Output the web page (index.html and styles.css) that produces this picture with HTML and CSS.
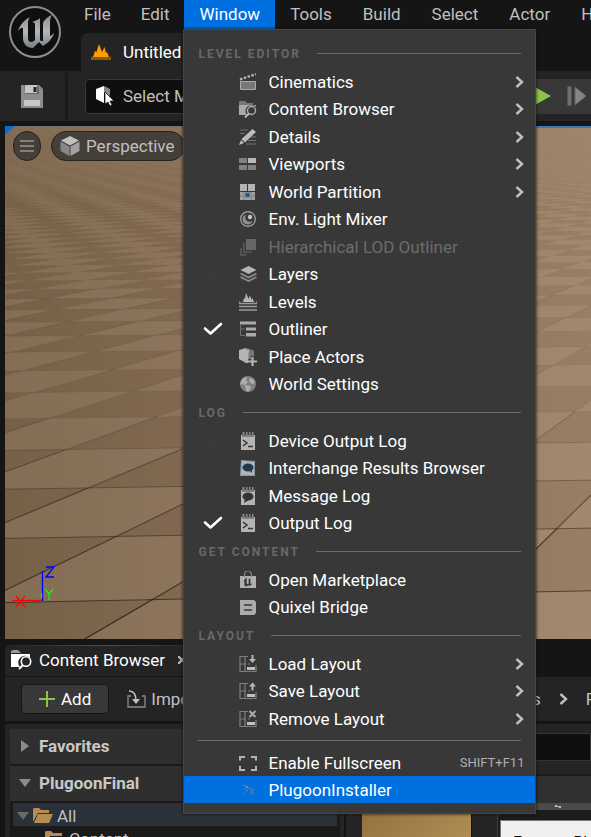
FILE: index.html
```html
<!DOCTYPE html>
<html lang="en">
<head>
<meta charset="utf-8">
<title>Level Editor</title>
<link rel="stylesheet" href="styles.css">
</head>
<body>
<svg class="defs" aria-hidden="true">
  <symbol id="check" viewBox="0 0 20 14"><path d="M2 6.500 7.500 11.500 18 2" fill="none" stroke="currentColor" stroke-width="2.600" stroke-linecap="round" stroke-linejoin="round"/></symbol>
  <symbol id="arrow" viewBox="0 0 9 14"><path d="M1.500 2 7 7l-5.500 5" fill="none" stroke="currentColor" stroke-width="2.400"/></symbol>
  <symbol id="log" viewBox="0 0 18 18"><path d="M2 3h14v15H2z" fill="#b4b4b4"/><path d="M3.500 0h2v4h-2zM7 0h1.500v4H7zM10 0h1.500v4H10zM13 0h1.500v4H13z" fill="#8a8a8a"/><path d="M3 4h12" stroke="#555"/></symbol>
  <symbol id="layout" viewBox="0 0 18 18"><path d="M9 1.500H1v15h16V10M1 9h6M6 2v14M9 9h2" fill="none" stroke="#7f7f7f" stroke-width="1.200"/><path d="M8 12h8v3H8z" fill="#c0c0c0"/></symbol>
  <symbol id="u" viewBox="0 0 30 30"><path d="M1 12C4 7 8 4 13 2c-2 2-2 4-2 6v11c0 2 1 3 3 3 1 0 2-1 3-2V9c0-1-1-2-2-2 3-1 6-2 8-5 0 2-1 3-1 5v12c0 1 1 2 2 2s2-1 4-2c-2 4-5 7-9 8l-3-3-4 4C7 29 4 26 4 21V12c0-2-1-2-3 0z" fill="currentColor"/></symbol>
</svg>
<div class="app">
  <header class="header">
    <div class="logo">
      <svg viewBox="0 0 54 54" width="54" height="54" role="img" aria-label="Engine logo">
        <defs><linearGradient id="metal" x2="0" y2="1"><stop stop-color="#8c8e90"/><stop offset=".5" stop-color="#b4b6b7"/><stop offset="1" stop-color="#7b7e80"/></linearGradient></defs>
        <circle cx="27" cy="27" r="25" fill="#0e0f10" stroke="#8b8f91" stroke-width="2"/>
        <path d="M10 26c2-6 6-11 12-14-2 3-2 5-2 7v14c0 2 1 4 3 4 2 0 3-1 4-2V20c0-2-1-3-3-3 4-1 7-3 8-4v21c0 2 1 2 2 2h1V19c0-3 4-7 9-9-2 3-2 5-2 8v13c1 0 2-1 4-3-2 6-6 10-11 13l-4-4-6 6c-7 0-10-5-10-10V24c0-2-2-2-5 2z" fill="url(#metal)"/>
      </svg>
    </div>
    <div class="header-rows">
      <nav class="menubar" aria-label="Main menu">
        <button>File</button>
        <button>Edit</button>
        <div class="menu-anchor">
          <button class="open" aria-expanded="true">Window</button>
          <div class="menu" role="menu">
            <h2>Level Editor</h2>
            <div class="group">
              <button class="item"><span></span><svg class="icon" viewBox="0 0 18 18"><path d="M1.500 8.500h15v8h-15z" fill="#777" stroke="#aaa"/><path d="M1 6.500 17 1" stroke="#b5b5b5" stroke-width="2.400" stroke-dasharray="2.500 1.500"/></svg>Cinematics<svg class="arrow"><use href="#arrow"/></svg></button>
              <button class="item"><span></span><svg class="icon" viewBox="0 0 18 18"><path d="M0 1h6l2 2h6v3H0z" fill="#777"/><path d="M0 5h17v2a6 6 0 0 0-9 8H0z" fill="#aaa"/><circle cx="12.500" cy="10.500" r="4" fill="#383838" stroke="#aaa" stroke-width="1.500"/><path d="m10 13.500-4 4" stroke="#bbb" stroke-width="1.800"/></svg>Content Browser<svg class="arrow"><use href="#arrow"/></svg></button>
              <button class="item"><span></span><svg class="icon" viewBox="0 0 18 18"><path d="M1 2h8M1 5.500h5M11 9h6M9 12.500h8M7 16h10" stroke="#707070"/><path d="m13.500 1 3.500 3L6 14.500 2.500 11zM2 12l3 3-5 2z" fill="#bcbcbc"/></svg>Details<svg class="arrow"><use href="#arrow"/></svg></button>
              <button class="item"><span></span><svg class="icon" viewBox="0 0 18 18"><path d="M0 3h8v5H0zM0 10h8v5H0zM9 10h8v5H9z" fill="#808080"/><path d="M9 3h8v5H9z" fill="#b8b8b8"/></svg>Viewports<svg class="arrow"><use href="#arrow"/></svg></button>
              <button class="item"><span></span><svg class="icon" viewBox="0 0 18 18"><path d="M1 1h7v7H1zM9 1h7v7H9z" fill="#b4b4b4"/><path d="M1 9h15v8H1z" fill="#a0a0a0"/><path d="M1 13h4M12 13h4M5 9v8M12 9v8" stroke="#808080"/><path d="M6 9.500h5v5H6z" fill="#607890"/><path d="M7 10.500h3v3H7z" fill="#114d94"/></svg>World Partition<svg class="arrow"><use href="#arrow"/></svg></button>
              <button class="item"><svg class="check off"><use href="#check"/></svg><svg class="icon" viewBox="0 0 18 18"><circle cx="9" cy="9" r="7.300" fill="none" stroke="#999" stroke-width="1.400"/><path d="M7.500 4.500a5 5 0 1 0 6 6 4 4 0 0 1-6-6z" fill="#909090"/><circle cx="11" cy="7" r="2.200" fill="#c4c4c4"/></svg>Env. Light Mixer</button>
              <button class="item" disabled><span></span><svg class="icon" viewBox="0 0 18 18"><path d="M7 1h10v11H7z" fill="#666"/><path d="M4 5h2v8h7v2H4zM1 10h2v6h4v2H1z" fill="#525252"/></svg>Hierarchical LOD Outliner</button>
              <button class="item"><svg class="check off"><use href="#check"/></svg><svg class="icon" viewBox="0 0 18 18"><path d="m9.500 1 8 4-8 4-8-4z" fill="#b4b4b4"/><path d="m1.500 8.500 8 4 8-4M1.500 12l8 4 8-4" fill="none" stroke="#8c8c8c" stroke-width="1.700"/></svg>Layers</button>
              <button class="item"><svg class="check off"><use href="#check"/></svg><svg class="icon" viewBox="0 0 18 18"><path d="M4 9 5 5l1 1L7 0l2.500 6L11 2.500 12.500 7l1-2L15 9z" fill="#b8b8b8"/><path d="M.500 8.500v2h17v-2M0 13.500h18M0 17h18" fill="none" stroke="#999" stroke-width="1.300"/></svg>Levels</button>
              <button class="item"><svg class="check"><use href="#check"/></svg><svg class="icon" viewBox="0 0 18 18"><path d="M1 1.500h16v3H1zM7 7.500h10v3H7zM7 13h10v3.500H7z" fill="#aaa"/><path d="M1.500 5v10.500H6M2 9h4" fill="none" stroke="#707070"/></svg>Outliner</button>
              <button class="item"><svg class="check off"><use href="#check"/></svg><svg class="icon" viewBox="0 0 18 18"><path d="m0 2 7-2v15l-7-4z" fill="#b4b4b4"/><path d="m7 0 8 2.500V8h-3v3H9l-2 2z" fill="#777"/><path d="m7 2 3-1-1 14H7z" fill="#b4b4b4"/><path d="M13.500 9v9M9 13.500h9" stroke="#b4b4b4" stroke-width="2.200"/></svg>Place Actors</button>
              <button class="item"><svg class="check off"><use href="#check"/></svg><svg class="icon" viewBox="0 0 18 18"><circle cx="9" cy="9" r="8" fill="#808080"/><path d="M2 6c1-3 4-4 6-4l-1 3 2 2-3 3-3-1-2 1zM11 3l4 2 1 3-3 1-3-3zM6 10l5 1 1 2-3 4-2-2z" fill="#acacac"/></svg>World Settings</button>
            </div>
            <h2>Log</h2>
            <div class="group">
              <button class="item"><svg class="check off"><use href="#check"/></svg><svg class="icon" viewBox="0 0 18 18"><use href="#log"/><path d="m4 8 4 3-4 3M9 14.500h5" fill="none" stroke="#343434" stroke-width="1.500"/></svg>Device Output Log</button>
              <button class="item"><svg class="check off"><use href="#check"/></svg><svg class="icon" viewBox="0 0 18 18"><path d="m2 1 14 1v15H1z" fill="#8899a5"/><path d="m3 2 12 1v13H2z" fill="#aeb5b8"/><ellipse cx="9" cy="8.500" rx="5.500" ry="4" fill="#24384c"/><path d="m10 11 3 3v-4z" fill="#24384c"/></svg>Interchange Results Browser</button>
              <button class="item"><svg class="check off"><use href="#check"/></svg><svg class="icon" viewBox="0 0 18 18"><use href="#log"/><ellipse cx="9" cy="9.500" rx="5.500" ry="4" fill="#343434"/><path d="m6 12-1 4 5-3z" fill="#343434"/></svg>Message Log</button>
              <button class="item"><svg class="check"><use href="#check"/></svg><svg class="icon" viewBox="0 0 18 18"><use href="#log"/><path d="m4 8 4 3-4 3M9 14.500h5" fill="none" stroke="#343434" stroke-width="1.500"/></svg>Output Log</button>
            </div>
            <h2>Get Content</h2>
            <div class="group">
              <button class="item"><span></span><svg class="icon dark" viewBox="0 0 18 18"><path d="M1 5h16v12H1z" fill="#b0b0b0"/><path d="M5.500 6V3.500a3.500 3.500 0 0 1 7 0V6" fill="none" stroke="#808080" stroke-width="1.200"/><use href="#u" x="4" y="6" width="10" height="10"/></svg>Open Marketplace</button>
              <button class="item"><span></span><svg class="icon" viewBox="0 0 18 18"><path d="M1 2h14l2 2v11l-2 2H1z" fill="#aaa"/><path d="M5 7h8M5 12h8" stroke="#383838" stroke-width="1.600"/></svg>Quixel Bridge</button>
            </div>
            <h2>Layout</h2>
            <div class="group">
              <button class="item"><span></span><svg class="icon" viewBox="0 0 18 18"><use href="#layout"/><path d="M12.500 0h2v4H17l-3.500 4L10 4h2.500z" fill="#b8b8b8"/></svg>Load Layout<svg class="arrow"><use href="#arrow"/></svg></button>
              <button class="item"><span></span><svg class="icon" viewBox="0 0 18 18"><use href="#layout"/><path d="M12.500 8.500h2v-4H17L13.500.500 10 4.500h2.500z" fill="#b8b8b8"/></svg>Save Layout<svg class="arrow"><use href="#arrow"/></svg></button>
              <button class="item"><span></span><svg class="icon" viewBox="0 0 18 18"><use href="#layout"/><path d="m10.500 1 6 6m0-6-6 6" stroke="#b0b0b0" stroke-width="1.900"/></svg>Remove Layout<svg class="arrow"><use href="#arrow"/></svg></button>
            </div>
            <hr>
            <div class="group">
              <button class="item"><svg class="check off"><use href="#check"/></svg><svg class="icon" viewBox="0 0 18 18"><path d="M1 6.500V3h5M12 3h5v3.500M1 12v4h5M12 16h5v-4" fill="none" stroke="#b4b4b4" stroke-width="2"/></svg>Enable Fullscreen<kbd>SHIFT+F11</kbd></button>
              <button class="item selected"><span></span><svg class="icon" viewBox="0 0 18 18"><path d="m4 4 3 1M10 7l4 2-2 2 3 3" stroke="#56789a" stroke-width="1.500" fill="none"/><path d="m5 13 6-7M5 7l3 3" stroke="#247fc4" stroke-width="1.500"/><circle cx="8" cy="6" r="1" fill="#a39b58"/></svg>PlugoonInstaller</button>
            </div>
          </div>
        </div>
        <button>Tools</button>
        <button>Build</button>
        <button>Select</button>
        <button>Actor</button>
        <button>Help</button>
      </nav>
      <div class="level-tab"><svg viewBox="0 0 20 18" width="20" height="18"><path d="M2 14 4 8l1.500 1L8 1l3 8L13.500 4l1.500 6 1-1 2 5z" fill="#ff9c00"/><path d="M0 13v4h20v-4l-1 1H1z" fill="#8c5909"/></svg>Untitled</div>
    </div>
  </header>

  <div class="toolbar">
    <button class="save" aria-label="Save"><svg viewBox="0 0 22 23" width="22" height="23"><path d="M0 0h18l4 4v19H0z" fill="#8d8d8d"/><path d="M4 0h12v8H4z" fill="#c7c7c7"/><path d="M3 0h1v9h14V2l-2-2v8H4z" fill="#666"/><path d="M12.500 2h3v5h-3z" fill="#222"/><path d="M3 15h16v6H3z" fill="#c7c7c7"/></svg></button>
    <button class="mode"><svg viewBox="0 0 20 20" width="20" height="20"><path d="m1 3 8-3v17l-8-4z" fill="#fff"/><path d="m9 0 6 3v7L9 6z" fill="#888"/><path d="m10 6 9 9h-4l2 4-2 1-2-4-3 2z" fill="#fff" stroke="#111" stroke-width=".7"/></svg>Select Mode</button>
    <div class="play-controls">
      <button aria-label="Play"><svg viewBox="0 0 18 20" width="18" height="20"><path d="m0 0 18 10L0 20z" fill="#8bc34a"/></svg></button>
      <button aria-label="Step"><svg viewBox="0 0 20 20" width="20" height="20"><path d="M.500.500h4v19h-4z" fill="#6e6e6e"/><path d="m8 1 11 9L8 19z" fill="#858585" stroke="#666"/></svg></button>
    </div>
  </div>

  <main class="viewport">
    <svg class="scene" viewBox="5 126 586 513" preserveAspectRatio="xMinYMin slice" aria-hidden="true">
      <defs>
        <linearGradient id="shade"><stop stop-color="#766047"/><stop offset=".3" stop-color="#806950"/><stop offset="1" stop-color="#987f63"/></linearGradient>
        <linearGradient id="tone"><stop stop-color="#836c54"/><stop offset=".3" stop-color="#8b735a"/><stop offset="1" stop-color="#9f866b"/></linearGradient>
        <linearGradient id="fade" x2="0" y2="1"><stop stop-color="#fff"/><stop offset=".4" stop-color="#fff" stop-opacity=".8"/><stop offset="1" stop-color="#fff" stop-opacity="0"/></linearGradient>
        <mask id="far"><rect x="5" y="126" width="586" height="84" fill="url(#fade)"/></mask>
      </defs>
      <rect x="5" y="126" width="586" height="513" fill="url(#shade)"/>
      <path id="tiles" fill="#ffe6cc" fill-opacity=".1"/>
      <g id="seams" stroke="#1c120a" fill="none"></g>
      <rect x="5" y="126" width="586" height="84" fill="url(#tone)" mask="url(#far)"/>
      <path d="M536 126h55v2h-55z" fill="#3b79bd"/>
      <path d="M14 126h522v1.500H14z" fill="#727274"/>
      <path d="M5 126h10l-10 9z" fill="#0070e0"/>
      <g fill="none" stroke-width="1.300"><path d="M12 600.500h30" stroke="#f00"/><path d="M42.500 571v30" stroke="#00f"/><path d="M41.500 593v5" stroke="#0f0"/>
      <path d="m16 596 9 11m0-11-9 11" stroke="#f00"/><path d="m45 589 4 5 4-5m-4 5v6" stroke="#0f0"/><path d="M46 567h8l-8 10h8" stroke="#00f"/></g>
    </svg>
    <div class="viewport-bar">
      <button class="round" aria-label="Viewport options"><svg viewBox="0 0 14 12" width="14" height="12"><path d="M0 1h14M0 6h14M0 11h14" stroke="#c0c0c0" stroke-width="1.200"/></svg></button>
      <button class="pill"><svg viewBox="0 0 20 20" width="20" height="20"><path d="m10 0 9 4.500-9 5-9-5z" fill="#c0c0c0"/><path d="m.500 5.500 9 5V20l-9-5z" fill="#888"/><path d="m19.500 5.500-9 5V20l9-5z" fill="#a2a2a2"/></svg>Perspective</button>
    </div>
  </main>

  <section class="browser">
    <div class="browser-tabs">
      <div class="browser-tab"><svg viewBox="0 0 21 20" width="21" height="20"><path d="M0 3V1l2-1h5l3 3z" fill="#999"/><path d="M0 4h19v4a6 6 0 0 0-10 9H0z" fill="#fff"/><circle cx="15" cy="11.500" r="4.700" fill="#242424" stroke="#fff" stroke-width="1.600"/><path d="m12 15-4 4" stroke="#fff" stroke-width="2"/></svg>Content Browser<button aria-label="Close tab"><svg viewBox="0 0 8 8" width="8" height="8"><path d="m0 0 8 8m0-8L0 8" stroke="#c0c0c0" stroke-width="2"/></svg></button></div>
    </div>
    <div class="browser-bar">
      <button class="add"><svg viewBox="0 0 16 16" width="16" height="16"><path d="M8 0v16M0 8h16" stroke="#8bc34a" stroke-width="2"/></svg>Add</button>
      <button class="import"><svg viewBox="0 0 19 18" width="19" height="18"><path d="M4 6H1v11h17V6h-3" fill="none" stroke="#8c8c8c" stroke-width="1.300"/><path d="M2 1c5 0 7 4 7 10" fill="none" stroke="#c0c0c0" stroke-width="1.600"/><path d="M5 9h8l-4 5z" fill="#c0c0c0"/></svg>Import</button>
      <nav class="crumbs" aria-label="Folder path"><a href="#">Plugins</a><svg class="arrow"><use href="#arrow"/></svg><a href="#">Plugoon</a></nav>
    </div>
    <div class="browser-body">
      <aside class="sources">
        <button class="source"><svg viewBox="0 0 12 12" width="12" height="12"><path d="m2 0 8 6-8 6z" fill="#8c8c8c"/></svg>Favorites</button>
        <button class="source"><svg viewBox="0 0 12 12" width="12" height="12"><path d="M0 2h12L6 10z" fill="#8c8c8c"/></svg>PlugoonFinal</button>
        <div class="tree">
          <div class="node current"><svg viewBox="0 0 12 12" width="12" height="12"><path d="M0 2h12L6 10z" fill="#686868"/></svg><svg viewBox="0 0 20 16" width="20" height="16"><path d="M0 14V1l1-1h5l2 2h8v3H5z" fill="#b58d52"/><path d="M5 6h15l-4 9H1z" fill="#b58d52"/></svg>All</div>
          <div class="node child"><svg viewBox="0 0 20 16" width="20" height="16"><path d="M0 14V1l1-1h5l2 2h9v3H5z" fill="#b58d52"/><path d="M5 6h15l-4 9H1z" fill="#b58d52"/></svg>Content</div>
        </div>
      </aside>
      <div class="assets">
        <div class="search"><input type="text" aria-label="Search assets"></div>
        <div class="asset-grid">
          <div class="asset texture"></div>
          <div class="asset"><div class="thumb"></div><div class="ribbon"><svg viewBox="0 0 6 3" width="6" height="3"><path d="M0 0h2v1h4v2H4V2H0z" fill="#bbb"/></svg></div></div>
          <div class="tooltip" role="tooltip">Execute Plugoon</div>
        </div>
      </div>
    </div>
  </section>
</div>
<script src="floor.js"></script>
</body>
</html>
```
FILE: styles.css
```css
* { box-sizing: border-box; }
body {
  margin: 0;
  background: #151515;
  color: #c0c0c0;
  font-family: Roboto, "Liberation Sans", sans-serif;
  font-size: 17px;
  line-height: 20px;
  overflow: hidden;
}
button, input { font: inherit; color: inherit; background: none; border: 0; margin: 0; padding: 0; }
button { text-align: left; white-space: nowrap; }
svg { display: block; flex: none; }
.defs { position: absolute; width: 0; height: 0; }
.app { height: 100vh; display: flex; flex-direction: column; overflow: hidden; }

.header { display: flex; flex: none; height: 71px; }
.logo { flex: none; width: 81px; padding: 5px 8px; }
.header-rows { flex: 1; min-width: 0; display: flex; flex-direction: column; justify-content: space-between; }
.menubar { display: flex; height: 29px; margin-left: -12px; }
.menubar > button, .menu-anchor > button { height: 29px; padding: 0 15px 2px; }
.menubar .menu-anchor ~ button { padding-right: 16px; }
.menubar .open { background: #0070e0; color: #fff; }
.menu-anchor { position: relative; z-index: 5; }
.level-tab { display: flex; align-items: center; gap: 12px; height: 38px; padding: 0 10px; background: #242424; color: #fff; border-radius: 6px 0 0 0; width: 160px; }

.menu {
  position: absolute; top: 100%; left: -1px; width: 353px;
  padding: 9px 0; background: #383838; border: 1px solid #454545;
  box-shadow: 0 0 3px #111;
}
.menu h2 {
  display: flex; align-items: center; gap: 16px; height: 29px; margin: 0; padding: 0 14px;
  font-size: 12px; font-weight: 700; letter-spacing: 2px; text-transform: uppercase; color: #686868; white-space: nowrap;
}
.menu h2::after { content: ""; flex: 1; height: 1px; background: #6c6c6c; }
.menu hr { height: 1px; margin: 8px 14px; border: 0; background: #6c6c6c; }
.item { display: grid; grid-template-columns: 36px 29px 1fr auto; align-items: center; width: 100%; height: 27px; padding: 0 11px 0 19px; color: #fff; }
.item:nth-child(even) { margin-bottom: 1px; }
.item:disabled { color: #6c6c6c; }
.item.selected { background: #0070e0; }
.icon { width: 18px; height: 18px; }
.icon.dark { color: #343434; }
.check { width: 20px; height: 14px; color: #fff; }
.check.off { color: #3b3b3b; }
.arrow { width: 9px; height: 14px; color: #c0c0c0; }
kbd { font-family: inherit; font-size: 13px; color: #b0b0b0; }

.toolbar { display: flex; align-items: center; flex: none; height: 50px; background: #242424; }
.save { width: 68px; height: 47px; padding-left: 21px; border-right: 3px solid #1a1a1a; display: flex; align-items: center; }
.mode { display: flex; align-items: center; gap: 8px; width: 160px; height: 35px; margin-left: 17px; padding: 0 9px; background: #0f0f0f; border: 1px solid #383838; border-radius: 4px; }
.play-controls { flex: 1; display: flex; align-items: center; justify-content: flex-end; gap: 16px; height: 35px; margin-left: 60px; padding-right: 4px; background: #383838; }

.viewport { position: relative; flex: 1; min-height: 0; margin: 5px 0 6px 5px; overflow: hidden; background: #826b52; }
.scene { position: absolute; inset: 0; width: 100%; height: 100%; }
.viewport-bar { position: relative; display: flex; gap: 10px; padding: 5px 8px; }
.round, .pill { height: 30px; background: #443f39; border: 1px solid #25221f; border-radius: 15px; display: flex; align-items: center; }
.round { width: 28px; justify-content: center; }
.pill { gap: 6px; padding: 0 10px 0 8px; }

.browser { flex: none; height: 192px; margin-left: 5px; display: flex; flex-direction: column; }
.browser-tabs { flex: none; height: 31px; display: flex; }
.browser-tab { display: flex; align-items: center; gap: 7px; width: 200px; padding: 0 6px 1px; background: linear-gradient(90deg, #242424, #0b5cb4 50%, #242424) 0 0 / 100% 1px no-repeat #242424; color: #fff; border-radius: 5px 5px 0 0; white-space: nowrap; }
.browser-tab button { margin-left: 6px; }
.browser-bar { display: flex; align-items: center; flex: none; height: 44px; margin-top: 1px; padding: 0 16px; background: #242424; }
.add { display: flex; align-items: center; gap: 6px; width: 89px; height: 30px; padding: 0 17px; background: #383838; border: 1px solid #151515; border-radius: 4px; color: #fff; }
.import { display: flex; align-items: center; gap: 5px; margin-left: 18px; }
.crumbs { display: flex; align-items: center; gap: 18px; margin-left: 283px; white-space: nowrap; }
.crumbs a { color: inherit; text-decoration: none; }
.browser-body { flex: 1; min-height: 0; display: flex; margin-top: 3px; background: #242424; }
.sources { flex: none; width: 330px; margin-left: 5px; padding-top: 5px; background: #1a1a1a; box-shadow: inset 0 5px #242424; overflow: hidden; }
.source { display: flex; align-items: center; gap: 8px; width: 100%; height: 35px; margin-bottom: 2px; padding: 0 9px 1px; background: #2f2f2f; color: #c8c8c8; font-weight: 700; }
.tree { margin: 1px 3px; }
.node { display: flex; align-items: center; gap: 4px; height: 23px; padding: 2px 0 0 4px; }
.node.current { background: #2b3138; }
.node.child { padding-left: 32px; }
.assets { flex: 1; min-width: 0; margin-left: 4px; border-left: 2px solid #151515; display: flex; flex-direction: column; }
.search { height: 52px; padding: 9px 0; border-bottom: 2px solid #1a1a1a; display: flex; }
.search input { width: 100%; height: 28px; background: #0f0f0f; border: 1px solid #343434; }
.asset-grid { position: relative; flex: 1; display: flex; gap: 25px; padding-left: 16px; }
.asset { flex: none; width: 110px; background: #1c1c1c; border-left: 1px solid #3c3c3c; }
.asset.texture { background: linear-gradient(135deg, #8c6c3c, #b08c54); border: 0; border-right: 1px solid #111; }
.thumb { height: 27px; background: #303030; }
.ribbon { height: 7px; padding: 2px 57px; background: #4a4a4a; }
.tooltip { position: absolute; left: 154px; top: 44px; padding: 12px; background: #f0f0f0; color: #111; border: 1px solid #777; font-size: 16px; white-space: nowrap; }
```
FILE: floor.js
```js
// Two families of seams converge on the horizon; alternate cells are lighter.
const horizon = 119;
const point = (row, col) => {
  const scale = 1 / (0.002076 + 0.000318 * row);
  const slant = 1.712 + 0.3455 * col;
  const depth = scale * 0.9633 / (1 - scale * slant / 23834);
  return [975 - slant * depth, horizon + depth];
};
const at = (row, col) => point(row, col).map(v => v.toFixed(2)).join(' ');
let cells = '';
for (let row = -2; row < 70; row++) {
  for (let col = -5; col < 80; col++) {
    if ((row + col) % 2 === 0) {
      cells += `M${at(row, col)}L${at(row, col + 1)}L${at(row + 1, col + 1)}L${at(row + 1, col)}Z`;
    }
  }
}
document.getElementById('tiles').setAttribute('d', cells);
const seams = document.getElementById('seams');
const seam = (d, width, opacity) => {
  const path = document.createElementNS('http://www.w3.org/2000/svg', 'path');
  path.setAttribute('d', d);
  path.setAttribute('stroke-width', width);
  path.setAttribute('stroke-opacity', opacity);
  seams.append(path);
};
for (let row = -2; row < 12; row++) {
  const strength = Math.max(0.05, 0.6 - row * 0.14);
  seam(`M${at(row, -5)}L${at(row, 30)}`, 1, strength);
  for (let col = -5; col < 14; col++) {
    seam(`M${at(row, col)}L${at(row + 1, col)}`, 1.2, strength);
  }
}
```
